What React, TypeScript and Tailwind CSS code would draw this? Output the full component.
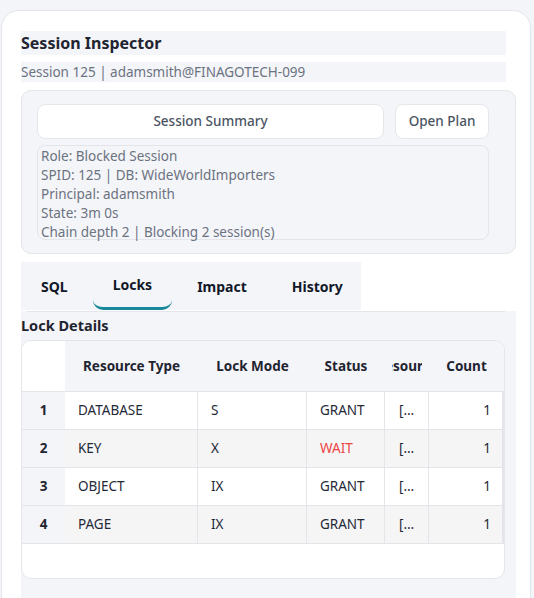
import React from "react";

const rows = [
  { n: 1, type: "DATABASE", mode: "S", status: "GRANT", res: "[DATABASE: 5]", count: 1 },
  { n: 2, type: "KEY", mode: "X", status: "WAIT", res: "[KEY: 7:72057594045857792]", count: 1 },
  { n: 3, type: "OBJECT", mode: "IX", status: "GRANT", res: "[OBJECT: 1509580416]", count: 1 },
  { n: 4, type: "PAGE", mode: "IX", status: "GRANT", res: "[PAGE: 7:1:2841]", count: 1 },
];

const cols = "grid grid-cols-[43px_133px_109px_78px_44px_75px]";

export default function App() {
  return (
    <div
      className="min-h-screen bg-[#f4f5f9] pt-[10px] pl-px overflow-hidden"
      style={{ fontFamily: '"Segoe UI", "Noto Sans", sans-serif' }}
    >
      <div className="w-[530px] h-[620px] bg-white border border-[#e3e5ea] rounded-t-[18px] pt-[20px] pl-[19px]">
        {/* HEADER */}
        <div className="w-[485px] bg-[#f4f5f9] h-[24px] flex items-center">
          <h1 className="text-[16px] font-bold text-[#1f2430] leading-none">Session Inspector</h1>
        </div>
        <div className="w-[485px] bg-[#f4f5f9] h-[20px] mt-[7px] flex items-center">
          <span className="text-[13.5px] text-[#6b7280]">Session 125 | adamsmith@FINAGOTECH-099</span>
        </div>

        {/* SUMMARY */}
        <div className="w-[495px] mt-[8px] bg-[#f4f5f9] border border-[#e3e5ea] rounded-[10px] pl-[15px] pr-[26px] pt-[13px] pb-[13px]">
          <div className="flex gap-[11px]">
            <button className="w-[347px] h-[35px] bg-white border border-[#e5e7eb] rounded-lg text-[13.5px] font-medium text-[#4b5563]">
              Session Summary
            </button>
            <button className="w-[94px] h-[35px] bg-white border border-[#e5e7eb] rounded-lg text-[13.5px] font-medium text-[#4b5563]">
              Open Plan
            </button>
          </div>
          <div className="mt-[6px] h-[95px] border border-[#e3e5ea] rounded-lg px-[3px] pt-px text-[13.5px] leading-[19px] text-[#6b7280]">
            <div>Role: Blocked Session</div>
            <div>SPID: 125 | DB: WideWorldImporters</div>
            <div>Principal: adamsmith</div>
            <div>State: 3m 0s</div>
            <div>Chain depth 2 | Blocking 2 session(s)</div>
          </div>
        </div>

        {/* TABS */}
        <div className="mt-[8px] w-[340px] h-[48px] bg-[#f4f5f9] flex gap-[5px]">
          {["SQL", "Locks", "Impact", "History"].map((t) => (
            <div
              key={t}
              className={`px-5 flex items-center text-[14px] font-bold text-[#111827] ${
                t === "Locks" ? "border-b-[3px] border-[#17899a] rounded-b-[10px]" : ""
              }`}
            >
              {t}
            </div>
          ))}
        </div>

        {/* LOCK DETAILS */}
        <div className="w-[495px] bg-[#f4f5f9] pb-[40px]">
          <div className="border-t border-[#e3e5ea] ml-[6px] w-[478px] mt-px" />
          <h2 className="text-[14.5px] font-bold text-[#1f2430] h-[28px] flex items-center">Lock Details</h2>
          <div className="w-[484px] h-[239px] bg-white border border-[#e3e5ea] rounded-[10px] overflow-hidden">
            <div className={`${cols} h-[51px] border-b border-[#e3e5ea]`}>
              <div className="bg-white" />
              {["Resource Type", "Lock Mode", "Status", "Resource", "Count"].map((h) => (
                <div key={h} className="bg-[#f4f5f9] px-[7px] flex">
                  <div className="flex-1 min-w-0 flex items-center justify-center overflow-hidden whitespace-nowrap text-[13.5px] font-bold text-[#1f2430]">
                    {h}
                  </div>
                </div>
              ))}
            </div>
            {rows.map((r) => (
              <div
                key={r.n}
                className={`${cols} h-[38px] border-b border-[#e3e5ea] text-[13.5px] text-[#1f2937] ${
                  r.n % 2 === 0 ? "bg-[#f5f5f6]" : "bg-white"
                }`}
              >
                <div className="bg-[#f4f5f9] flex items-center justify-center font-bold text-[#1f2430]">{r.n}</div>
                <div className="flex items-center px-[13px] border-r border-[#e3e5ea]">{r.type}</div>
                <div className="flex items-center px-[13px] border-r border-[#e3e5ea]">{r.mode}</div>
                <div
                  className={`flex items-center px-[13px] border-r border-[#e3e5ea] ${
                    r.status === "WAIT" ? "text-[#ef4444]" : ""
                  }`}
                >
                  {r.status}
                </div>
                <div className="px-[14px] border-r border-[#e3e5ea] truncate leading-[37px]">{r.res}</div>
                <div className="flex items-center justify-end pr-[11px] border-r-2 border-[#e3e5ea]">{r.count}</div>
              </div>
            ))}
          </div>
        </div>
      </div>
    </div>
  );
}
